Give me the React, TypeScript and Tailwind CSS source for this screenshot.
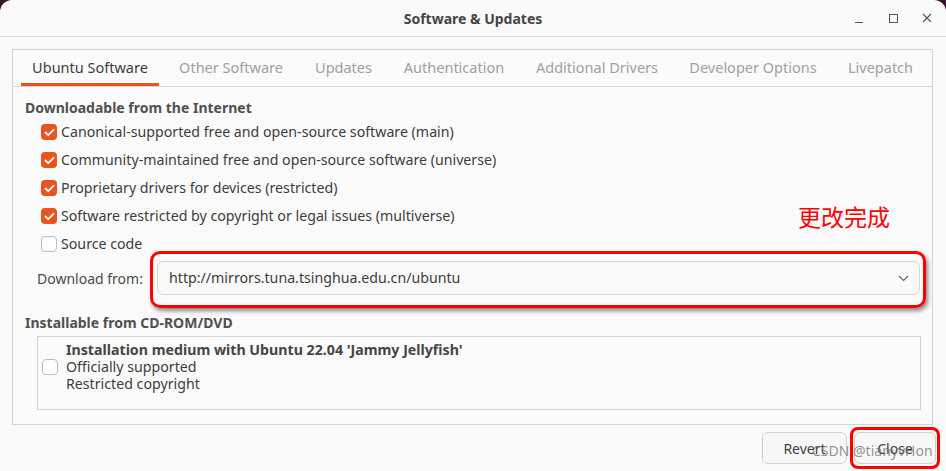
import React from "react"

const font = { fontFamily: '"Noto Sans", "Open Sans", sans-serif' }

const tabs = [
  { label: "Ubuntu Software", w: "w-[146px]", active: true },
  { label: "Other Software", w: "w-[136px]" },
  { label: "Updates", w: "w-[89px]" },
  { label: "Authentication", w: "w-[132px]" },
  { label: "Additional Drivers", w: "w-[154px]" },
  { label: "Developer Options", w: "w-[158px]" },
  { label: "Livepatch", w: "w-[97px]" },
]

const sources = [
  { label: "Canonical-supported free and open-source software (main)", on: true },
  { label: "Community-maintained free and open-source software (universe)", on: true },
  { label: "Proprietary drivers for devices (restricted)", on: true },
  { label: "Software restricted by copyright or legal issues (multiverse)", on: true },
  { label: "Source code", on: false },
]

function Check({ on }: { on: boolean }) {
  if (!on) return <div className="w-[16px] h-[16px] rounded-[4px] border border-[#bdbdbd] bg-white shrink-0" />
  return (
    <div className="w-[16px] h-[16px] rounded-[4px] bg-[#e95420] flex items-center justify-center shrink-0">
      <svg width="11" height="9" viewBox="0 0 11 9" fill="none">
        <path d="M1.5 4.5 L4.2 7.2 L9.5 1.8" stroke="white" strokeWidth="1.8" strokeLinecap="round" strokeLinejoin="round" />
      </svg>
    </div>
  )
}

export default function App() {
  return (
    <div className="w-[946px] h-[471px] bg-[#3b1430] overflow-hidden" style={font}>
      <div className="relative w-full h-full rounded-t-[12px] bg-[#fafafa] flex flex-col text-[#3d3d3d]">
        {/* title bar */}
        <div className="relative h-[37px] shrink-0 border-b border-[#dadada] flex items-center justify-center">
          <span className="text-[14px] font-bold text-[#454545]">Software &amp; Updates</span>
          <div className="absolute right-0 top-0 h-[36px] flex items-center">
            <div className="w-[34px] flex justify-center pt-[8px]"><div className="w-[8px] h-[1px] bg-[#555]" /></div>
            <div className="w-[34px] flex justify-center"><div className="w-[9px] h-[9px] border border-[#555]" /></div>
            <div className="w-[34px] flex justify-center mr-[2px]">
              <svg width="10" height="10" viewBox="0 0 10 10"><path d="M1 1 L9 9 M9 1 L1 9" stroke="#555" strokeWidth="1.1" /></svg>
            </div>
          </div>
        </div>

        {/* notebook */}
        <div className="ml-[12px] mt-[12px] w-[921px] h-[376px] border border-[#d2d2d2] bg-[#fbfbfb] flex flex-col">
          <div className="h-[37px] shrink-0 border-b border-[#d8d8d8] flex pl-[4px]">
            {tabs.map((t) => (
              <div key={t.label} className={`${t.w} relative flex items-center justify-center text-[14.5px] ${t.active ? "text-[#3d3d3d]" : "text-[#a0a0a0]"}`}>
                {t.label}
                {t.active && <div className="absolute left-[4px] right-[4px] bottom-0 h-[3px] bg-[#e95420]" />}
              </div>
            ))}
          </div>

          <div className="pt-[10px] flex flex-col">
            <div className="h-[21px] pl-[12px] flex items-center text-[14px] font-bold text-[#505050]">Downloadable from the Internet</div>
            {sources.map((s) => (
              <div key={s.label} className="h-[28px] pl-[28px] flex items-center gap-[4px] text-[14.2px]">
                <Check on={s.on} />
                <span>{s.label}</span>
              </div>
            ))}

            <div className="mt-[3px] h-[34px] pl-[24px] flex items-center">
              <div className="w-[120px] text-[14px] text-[#4a4a4a]">Download from:</div>
              <div className="relative w-[763px] h-[34px]">
                <div className="w-full h-full rounded-[6px] border border-[#d4d4d4] bg-[#f9f9f9] flex items-center justify-between pl-[11px] pr-[10px] text-[14.2px]">
                  <span>http://mirrors.tuna.tsinghua.edu.cn/ubuntu</span>
                  <svg width="11" height="7" viewBox="0 0 11 7"><path d="M1 1 L5.5 5.5 L10 1" stroke="#666" strokeWidth="1.1" fill="none" /></svg>
                </div>
                <div className="absolute -left-[7px] -right-[6px] -top-[10px] -bottom-[13px] rounded-[10px] border-[3px] border-[#ff0000] shadow-[2px_3px_4px_rgba(0,0,0,0.45)]" />
              </div>
            </div>

            <div className="mt-[17px] h-[20px] pl-[12px] flex items-center text-[14px] font-bold text-[#505050]">Installable from CD-ROM/DVD</div>
            <div className="mt-[4px] ml-[24px] w-[884px] h-[74px] border border-[#d2d2d2] pt-[4px]">
              <div className="flex items-center">
                <div className="pl-[4px] pr-[8px]"><Check on={false} /></div>
                <div className="flex flex-col text-[14.2px] leading-[17px]">
                  <span className="font-bold text-[#454545]">Installation medium with Ubuntu 22.04 'Jammy Jellyfish'</span>
                  <span>Officially supported</span>
                  <span>Restricted copyright</span>
                </div>
              </div>
            </div>
          </div>
        </div>

        {/* buttons */}
        <div className="mt-[7px] flex justify-end gap-[7px] pr-[10px]">
          <div className="w-[85px] h-[32px] rounded-[6px] border border-[#cfcfcf] bg-[#f8f8f8] flex items-center justify-center text-[14px]">Revert</div>
          <div className="relative w-[82px] h-[32px] rounded-[6px] border border-[#cfcfcf] bg-[#f8f8f8] flex items-center justify-center text-[14px]">
            Close
            <div className="absolute -left-[5px] -right-[5px] -top-[6px] -bottom-[6px] rounded-[8px] border-[3px] border-[#ff0000]" />
          </div>
        </div>

        {/* annotations */}
        <div className="absolute left-[798px] top-[205px] text-[23px] text-[#ff0000] leading-none" style={{ fontFamily: '"Noto Sans CJK SC", sans-serif' }}>更改完成</div>
        <div className="absolute left-[812px] top-[444px] text-[14px] text-[rgba(110,110,110,0.75)] leading-none">CSDN @tianyvHon</div>
      </div>
    </div>
  )
}
